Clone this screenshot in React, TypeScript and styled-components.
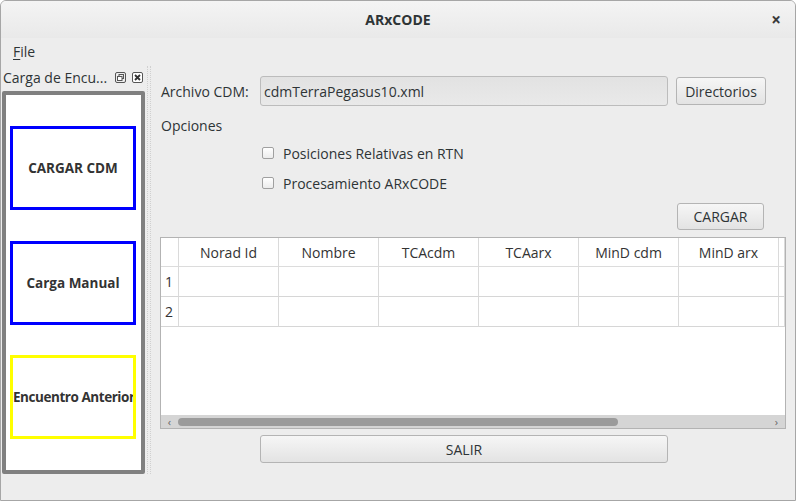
import React from "react";
import styled, { createGlobalStyle } from "styled-components";

const GlobalStyle = createGlobalStyle`
  body {
    margin: 0;
    font-family: "Open Sans", "DejaVu Sans", sans-serif;
    font-size: 14px;
    color: #2e3436;
  }
`;

const StyledWindow = styled.div`
  width: 796px;
  height: 501px;
  box-sizing: border-box;
  border: 1px solid #a6a6a6;
  border-radius: 6px 6px 0 0;
  background: #ededed;
  display: flex;
  flex-direction: column;
  overflow: hidden;
`;

const StyledTitleBar = styled.div`
  height: 37px;
  flex: none;
  display: grid;
  grid-template-columns: 1fr auto 1fr;
  align-items: center;
  background: linear-gradient(#f4f4f4, #e9e9e9);
  font-weight: 700;
`;

const StyledTitle = styled.div`
  grid-column: 2;
`;

const StyledClose = styled.div`
  justify-self: end;
  margin-right: 14px;
  font-size: 17px;
  color: #3a3a3a;
`;

const StyledMenuBar = styled.div`
  height: 26px;
  flex: none;
  display: flex;
  align-items: center;
  padding-left: 12px;
  u {
    text-decoration-thickness: 1px;
    text-underline-offset: 2px;
  }
`;

const StyledBody = styled.div`
  flex: 1;
  display: flex;
  min-height: 0;
`;

const StyledDock = styled.div`
  width: 146px;
  flex: none;
  display: flex;
  flex-direction: column;
`;

const StyledDockTitle = styled.div`
  height: 27px;
  display: flex;
  align-items: center;
  padding: 0 4px 0 2px;
  gap: 6px;
  span {
    flex: 1;
    white-space: nowrap;
    overflow: hidden;
  }
`;

const StyledDockFrame = styled.div`
  margin-left: 1px;
  width: 143px;
  height: 383px;
  box-sizing: border-box;
  border: 4px solid #808080;
  border-radius: 2px;
  background: #fff;
  display: flex;
  flex-direction: column;
  justify-content: space-evenly;
  padding: 0 4px;
`;

const StyledDockButton = styled.div<{ $color: string; $tight?: boolean }>`
  height: 84px;
  width: 126px;
  box-sizing: border-box;
  border: 3px solid ${(p) => p.$color};
  display: flex;
  align-items: center;
  justify-content: safe center;
  overflow: hidden;
  white-space: nowrap;
  font-weight: 700;
  font-size: 13.5px;
  letter-spacing: ${(p) => (p.$tight ? "-0.45px" : "0")};
  color: #333;
`;

const StyledSplitter = styled.div`
  width: 4px;
  flex: none;
  border-left: 1px dotted #d0d0d0;
  border-right: 1px dotted #d0d0d0;
  box-sizing: border-box;
  margin: 2px 0 26px;
`;

const StyledMain = styled.div`
  flex: 1;
  display: flex;
  flex-direction: column;
  padding: 12px 9px 0 10px;
`;

const StyledFileRow = styled.div`
  height: 30px;
  display: flex;
  align-items: center;
`;

const StyledLabel = styled.div`
  width: 99px;
  box-sizing: border-box;
`;

const StyledField = styled.div`
  width: 408px;
  height: 30px;
  box-sizing: border-box;
  border: 1px solid #bcbcbc;
  border-radius: 3px;
  background: linear-gradient(#e2e2e2, #e9e9e9);
  display: flex;
  align-items: center;
  padding-left: 3px;
`;

const StyledButton = styled.div<{ $width: number; $height: number }>`
  width: ${(p) => p.$width}px;
  height: ${(p) => p.$height}px;
  box-sizing: border-box;
  border: 1px solid #b4b4b4;
  border-radius: 3px;
  background: linear-gradient(#f6f6f6, #e3e3e3);
  display: flex;
  align-items: center;
  justify-content: center;
  color: #2e3436;
`;

const StyledOptions = styled.div`
  height: 26px;
  margin-top: 6px;
  display: flex;
  align-items: center;
`;

const StyledCheckRow = styled.div`
  height: 30px;
  display: flex;
  align-items: center;
  padding-left: 101px;
  gap: 9px;
`;

const StyledCheckbox = styled.div`
  width: 12px;
  height: 12px;
  box-sizing: border-box;
  border: 1px solid #a0a0a0;
  border-radius: 2px;
  background: linear-gradient(#ffffff, #ececec);
`;

const StyledActionRow = styled.div`
  margin-top: 5px;
  display: flex;
  justify-content: flex-end;
  padding-right: 22px;
`;

const StyledTable = styled.div`
  margin-top: 7px;
  margin-left: -1px;
  height: 192px;
  box-sizing: border-box;
  border: 1px solid #b3b3b3;
  background: #fff;
  display: flex;
  flex-direction: column;
`;

const StyledGrid = styled.div`
  flex: 1;
  display: grid;
  grid-template-columns: 18px repeat(6, 100px) 6px;
  grid-template-rows: 29px 30px 30px;
  align-content: start;
`;

const StyledCell = styled.div<{ $header?: boolean; $corner?: boolean }>`
  border-right: 1px solid #dadada;
  border-bottom: 1px solid ${(p) => (p.$header ? "#dcdcdc" : "#d6d6d6")};
  display: flex;
  align-items: center;
  justify-content: ${(p) => (p.$header ? "center" : "flex-start")};
  padding-left: ${(p) => (p.$corner ? "4px" : "0")};
  color: #333;
`;

const StyledScrollbar = styled.div`
  height: 13px;
  flex: none;
  background: #d5d5d5;
  display: flex;
  align-items: center;
  font-size: 11px;
  color: #666;
`;

const StyledArrow = styled.div`
  width: 17px;
  text-align: center;
  line-height: 13px;
`;

const StyledThumb = styled.div`
  width: 440px;
  height: 8px;
  border-radius: 4px;
  background: #9b9b9b;
`;

const StyledBottomRow = styled.div`
  margin-top: 6px;
  padding-left: 99px;
`;

const columns = ["Norad Id", "Nombre", "TCAcdm", "TCAarx", "MinD cdm", "MinD arx"];

function FloatIcon() {
  return (
    <svg width="11" height="11" viewBox="0 0 11 11">
      <rect x="0.5" y="0.5" width="10" height="10" rx="1.5" fill="none" stroke="#555" />
      <rect x="4" y="2.5" width="4.5" height="4" fill="none" stroke="#555" />
      <rect x="2.5" y="4.5" width="4.5" height="4" fill="#fff" stroke="#555" />
    </svg>
  );
}

function CloseIcon() {
  return (
    <svg width="11" height="11" viewBox="0 0 11 11">
      <rect x="0.5" y="0.5" width="10" height="10" rx="1.5" fill="#fff" stroke="#555" />
      <path d="M3 3 L8 8 M8 3 L3 8" stroke="#333" strokeWidth="1.8" />
    </svg>
  );
}

export default function App() {
  return (
    <>
      <GlobalStyle />
      <StyledWindow>
        <StyledTitleBar>
          <StyledTitle>ARxCODE</StyledTitle>
          <StyledClose>×</StyledClose>
        </StyledTitleBar>
        <StyledMenuBar>
          <span>
            <u>F</u>ile
          </span>
        </StyledMenuBar>
        <StyledBody>
          <StyledDock>
            <StyledDockTitle>
              <span>Carga de Encu...</span>
              <FloatIcon />
              <CloseIcon />
            </StyledDockTitle>
            <StyledDockFrame>
              <StyledDockButton $color="#0000ff">CARGAR CDM</StyledDockButton>
              <StyledDockButton $color="#0000ff">Carga Manual</StyledDockButton>
              <StyledDockButton $color="#ffff00" $tight>
                Encuentro Anterior
              </StyledDockButton>
            </StyledDockFrame>
          </StyledDock>
          <StyledSplitter />
          <StyledMain>
            <StyledFileRow>
              <StyledLabel>Archivo CDM:</StyledLabel>
              <StyledField>cdmTerraPegasus10.xml</StyledField>
              <div style={{ width: 8 }} />
              <StyledButton $width={90} $height={28}>
                Directorios
              </StyledButton>
            </StyledFileRow>
            <StyledOptions>Opciones</StyledOptions>
            <StyledCheckRow>
              <StyledCheckbox />
              Posiciones Relativas en RTN
            </StyledCheckRow>
            <StyledCheckRow>
              <StyledCheckbox />
              Procesamiento ARxCODE
            </StyledCheckRow>
            <StyledActionRow>
              <StyledButton $width={87} $height={27}>
                CARGAR
              </StyledButton>
            </StyledActionRow>
            <StyledTable>
              <StyledGrid>
                <StyledCell $header />
                {columns.map((c) => (
                  <StyledCell $header key={c}>
                    {c}
                  </StyledCell>
                ))}
                <StyledCell $header />
                {[1, 2].map((r) => (
                  <React.Fragment key={r}>
                    <StyledCell $corner>{r}</StyledCell>
                    {columns.map((c) => (
                      <StyledCell key={c} />
                    ))}
                    <StyledCell />
                  </React.Fragment>
                ))}
              </StyledGrid>
              <StyledScrollbar>
                <StyledArrow>‹</StyledArrow>
                <StyledThumb />
                <div style={{ flex: 1 }} />
                <StyledArrow>›</StyledArrow>
              </StyledScrollbar>
            </StyledTable>
            <StyledBottomRow>
              <StyledButton $width={408} $height={28}>
                SALIR
              </StyledButton>
            </StyledBottomRow>
          </StyledMain>
        </StyledBody>
      </StyledWindow>
    </>
  );
}
